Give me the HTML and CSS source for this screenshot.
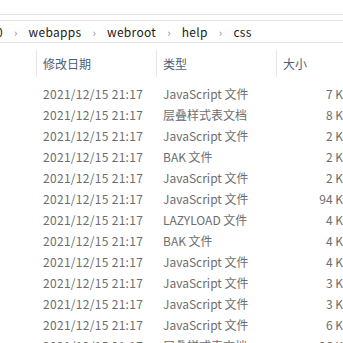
FILE: index.html
```html
<!DOCTYPE html>
<html lang="zh-CN">
<head>
  <meta charset="UTF-8" />
  <title>css</title>
  <link rel="stylesheet" href="styles.css">
</head>
<body>
  <div class="ribbon-edge"></div>

  <!-- Address bar -->
  <div class="address">
    <span class="crumb crumb-cut">0</span>
    <span class="sep">›</span>
    <span class="crumb">webapps</span>
    <span class="sep">›</span>
    <span class="crumb">webroot</span>
    <span class="sep">›</span>
    <span class="crumb">help</span>
    <span class="sep">›</span>
    <span class="crumb">css</span>
  </div>

  <!-- File list -->
  <div class="list">
    <div class="head">
      <div class="col col-date">修改日期</div>
      <div class="col col-type">类型</div>
      <div class="col col-size">大小</div>
    </div>

    <div class="row"><span class="c-date">2021/12/15 21:17</span><span class="c-type">JavaScript 文件</span><span class="c-size">7 KB</span></div>
    <div class="row"><span class="c-date">2021/12/15 21:17</span><span class="c-type">层叠样式表文档</span><span class="c-size">8 KB</span></div>
    <div class="row"><span class="c-date">2021/12/15 21:17</span><span class="c-type">JavaScript 文件</span><span class="c-size">2 KB</span></div>
    <div class="row"><span class="c-date">2021/12/15 21:17</span><span class="c-type">BAK 文件</span><span class="c-size">2 KB</span></div>
    <div class="row"><span class="c-date">2021/12/15 21:17</span><span class="c-type">JavaScript 文件</span><span class="c-size">2 KB</span></div>
    <div class="row"><span class="c-date">2021/12/15 21:17</span><span class="c-type">JavaScript 文件</span><span class="c-size">94 KB</span></div>
    <div class="row"><span class="c-date">2021/12/15 21:17</span><span class="c-type">LAZYLOAD 文件</span><span class="c-size">4 KB</span></div>
    <div class="row"><span class="c-date">2021/12/15 21:17</span><span class="c-type">BAK 文件</span><span class="c-size">4 KB</span></div>
    <div class="row"><span class="c-date">2021/12/15 21:17</span><span class="c-type">JavaScript 文件</span><span class="c-size">4 KB</span></div>
    <div class="row"><span class="c-date">2021/12/15 21:17</span><span class="c-type">JavaScript 文件</span><span class="c-size">3 KB</span></div>
    <div class="row"><span class="c-date">2021/12/15 21:17</span><span class="c-type">JavaScript 文件</span><span class="c-size">3 KB</span></div>
    <div class="row"><span class="c-date">2021/12/15 21:17</span><span class="c-type">JavaScript 文件</span><span class="c-size">6 KB</span></div>
    <div class="row"><span class="c-date">2021/12/15 21:17</span><span class="c-type">层叠样式表文档</span><span class="c-size">26 KB</span></div>
  </div>
</body>
</html>
```

FILE: styles.css
```css
/* Explorer-like colours */
:root {
  --line: #e5e5e5;
  --text: #1a1a1a;
  --muted: #6d6d6d;
  --head: #4c607a;
}

body {
  margin: 0;
  background: #fff;
  font-family: "Noto Sans CJK SC", "Noto Sans", sans-serif;
  font-size: 12px;
  overflow: hidden;
  width: 343px;
  height: 343px;
}

/* Bottom edge of the ribbon */
.ribbon-edge {
  height: 14px;
  border-bottom: 1px solid var(--line);
  margin-bottom: 5px;
}

/* Breadcrumb bar */
.address {
  height: 21px;
  border-top: 1px solid var(--line);
  border-bottom: 1px solid var(--line);
  display: flex;
  align-items: center;
  color: var(--text);
  white-space: nowrap;
  letter-spacing: 0.3px;
}

.crumb-cut {
  margin-left: -4px;
}

.sep {
  color: #888;
  font-size: 11px;
  margin: 0 11px;
}

/* Details view */
.list {
  margin-left: 36px;
  width: 330px;
}

.head {
  display: flex;
  margin-top: 7px;
  height: 27px;
  margin-bottom: 6px;
}

.col {
  border-left: 1px solid var(--line);
  padding-left: 6px;
  display: flex;
  align-items: center;
  color: var(--head);
  box-sizing: border-box;
}

.col-date,
.col-type {
  width: 120px;
}

.col-size {
  width: 90px;
}

.row {
  display: flex;
  height: 21px;
  align-items: center;
  color: var(--muted);
  white-space: nowrap;
}

.c-date,
.c-type {
  width: 120px;
  padding-left: 7px;
  box-sizing: border-box;
}

.c-date {
  letter-spacing: 0.3px;
}

.c-size {
  width: 75px;
  text-align: right;
}
```
